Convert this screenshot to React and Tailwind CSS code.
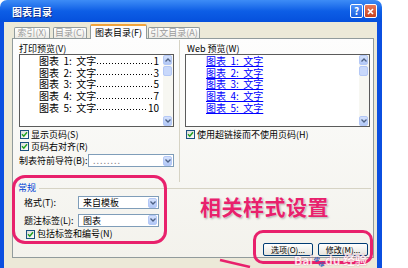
import React from 'react';

function Check() {
  return (
    <span className="w-[9px] h-[9px] shrink-0 border border-[#1c5180] bg-linear-to-br from-[#dcdcd7] to-white flex items-center justify-center">
      <svg width="7" height="7" viewBox="0 0 7 7">
        <path d="M1 3.2 L2.8 5.2 L6 1.3" fill="none" stroke="#21a121" strokeWidth="1.5" />
      </svg>
    </span>
  );
}

function Arrow({ up }) {
  return (
    <span className="w-[9px] h-[10px] shrink-0 rounded-[2px] border border-[#b4c8f6] bg-linear-to-b from-[#d4e1fc] to-[#b1c7f6] flex items-center justify-center">
      <svg width="6" height="4" viewBox="0 0 6 4">
        <path d={up ? 'M0.5 3.5 L3 1 L5.5 3.5' : 'M0.5 0.5 L3 3 L5.5 0.5'} fill="none" stroke="#4d6185" strokeWidth="1.3" />
      </svg>
    </span>
  );
}

function ScrollBar() {
  return (
    <div className="w-[10px] self-stretch bg-[#f7f7f2] flex flex-col">
      <Arrow up />
      <span className="w-[9px] h-[10px] mt-px rounded-[2px] border border-[#b4c8f6] bg-[#c8d8fb]" />
      <div className="flex-1" />
      <Arrow />
    </div>
  );
}

function Combo({ text, muted, className }) {
  return (
    <div className={`h-[13px] border border-[#7f9db9] bg-white flex items-center pr-px ${className}`}>
      <span className={`flex-1 pl-[4px] text-[9px] leading-none ${muted ? 'text-[#8a8a8a] tracking-[1px]' : 'text-black'}`}>{text}</span>
      <Arrow />
    </div>
  );
}

function Tab({ label, active, className }) {
  if (active) {
    return (
      <div className={`relative z-10 -mb-px shrink-0 whitespace-nowrap h-[15px] border border-b-0 border-[#919b9c] border-t-2 border-t-[#f1a33b] rounded-t-[2px] bg-[#fcfcfe] flex items-center justify-center text-[9px] text-black ${className}`}>
        {label}
      </div>
    );
  }
  return (
    <div className={`shrink-0 whitespace-nowrap h-[11px] border border-b-0 border-[#919b9c] rounded-t-[2px] bg-linear-to-b from-white to-[#ecebe6] flex items-center justify-center text-[9px] text-[#9b9b9b] ${className}`}>
      {label}
    </div>
  );
}

const rows = [
  ['1', '1'],
  ['2', '3'],
  ['3', '5'],
  ['4', '7'],
  ['5', '10'],
];

// caption text with the wide spacing the dialog uses
const caption = (n) => `图表\u00a0\u00a0${n}:\u00a0\u00a0文字`;

function XpButton({ children }) {
  return (
    <div className="w-[50px] h-[13px] rounded-[2px] border border-[#003c74] bg-linear-to-b from-white to-[#e6e5de] flex items-center justify-center text-[8px] text-black">
      {children}
    </div>
  );
}

export default function App() {
  return (
    <div className="relative w-[408px] h-[268px] bg-white overflow-hidden flex font-['Noto_Sans_CJK_SC','Noto_Sans',sans-serif]">
      <div className="w-[382px] h-full flex flex-col">
        {/* Title bar */}
        <div className="h-[22px] rounded-t-[7px] bg-linear-to-b from-[#3d8cf6] via-[#0d5ee6] to-[#0650dc] flex items-center pl-[12px] pr-[5px]">
          <span className="flex-1 text-[10px] font-bold text-white [text-shadow:1px_1px_0_#0a2a8a]">图表目录</span>
          <div className="flex gap-px">
            <span className="w-[13px] h-[14px] rounded-[2px] border border-white bg-linear-to-b from-[#4f93f9] to-[#1a5fe0] flex items-center justify-center text-[10px] font-bold text-white leading-none">?</span>
            <span className="w-[13px] h-[14px] rounded-[2px] border border-white bg-linear-to-b from-[#e9795a] to-[#c6401c] flex items-center justify-center">
              <svg width="7" height="7" viewBox="0 0 7 7">
                <path d="M1 1 L6 6 M6 1 L1 6" stroke="white" strokeWidth="1.6" />
              </svg>
            </span>
          </div>
        </div>

        {/* Body */}
        <div className="flex-1 flex">
          <div className="w-[4px] bg-[#0b4fe0]" />
          <div className="flex-1 bg-[#ece9d8] flex flex-col pl-[8px] pr-[3px]">
            <div className="h-[16px] flex items-end pl-[2px]">
              <Tab label="索引(X)" className="w-[36px]" />
              <Tab label="目录(C)" className="w-[34px] ml-[3px]" />
              <Tab label="图表目录(F)" active className="w-[57px] ml-[3px]" />
              <Tab label="引文目录(A)" className="w-[52px] ml-px" />
            </div>

            {/* Tab panel */}
            <div className="h-[220px] border border-[#919b9c] bg-linear-to-b from-[#fdfdfd] to-[#f3f2ec] flex flex-col">
              <div className="h-[143px] grid grid-cols-[155px_11px_185px] pl-[6px]">
                {/* Print preview */}
                <div className="flex flex-col pt-[4px]">
                  <div className="h-[11px] text-[9px] leading-[11px] text-black">打印预览(V)</div>
                  <div className="h-[73px] border border-[#5b5b5b] bg-white flex">
                    <div className="flex-1 flex flex-col pl-[19px] pr-[4px]">
                      {rows.map(([n, p]) => (
                        <div key={n} className="h-[11.7px] flex items-center text-[10px] leading-none text-black whitespace-nowrap">
                          <span>{caption(n)}</span>
                          <span className="flex-1 self-end mb-[3px] mx-px h-px bg-[linear-gradient(to_right,#000_1px,transparent_1px)] bg-[length:3px_1px] bg-repeat-x" />
                          <span>{p}</span>
                        </div>
                      ))}
                    </div>
                    <ScrollBar />
                  </div>
                  <div className="mt-[2px] h-[11px] flex items-center gap-[2px] pl-px text-[9px] text-black">
                    <Check />
                    <span>显示页码(S)</span>
                  </div>
                  <div className="mt-px h-[11px] flex items-center gap-[2px] pl-px text-[9px] text-black">
                    <Check />
                    <span>页码右对齐(R)</span>
                  </div>
                  <div className="mt-[2px] flex items-center text-[9px] text-black">
                    <span className="w-[69px]">制表符前导符(B):</span>
                    <Combo text="........" muted className="w-[86px] h-[12px]" />
                  </div>
                </div>

                <div className="flex justify-center pt-px">
                  <div className="w-px h-[142px] bg-[#d6d3c4]" />
                </div>

                {/* Web preview */}
                <div className="flex flex-col pt-[4px]">
                  <div className="h-[11px] pl-[2px] text-[9px] leading-[11px] text-black">Web 预览(W)</div>
                  <div className="h-[73px] border border-[#5b5b5b] bg-white flex">
                    <div className="flex-1 flex flex-col pl-[20px]">
                      {rows.map(([n]) => (
                        <div key={n} className="h-[11.7px] flex items-center text-[10px] leading-none text-[#0000ff] whitespace-nowrap">
                          <span className="underline">{caption(n)}</span>
                        </div>
                      ))}
                    </div>
                    <ScrollBar />
                  </div>
                  <div className="mt-[2px] h-[11px] flex items-center gap-[2px] pl-px text-[9px] text-black">
                    <Check />
                    <span>使用超链接而不使用页码(H)</span>
                  </div>
                </div>
              </div>

              {/* General group */}
              <div className="h-[12px] flex items-center pl-[5px] pr-[2px] gap-[3px]">
                <span className="text-[9px] text-[#0046d5]">常规</span>
                <div className="flex-1 h-px bg-[#d6d3c4]" />
              </div>
              <div className="mt-[2px] flex items-center pl-[11px] text-[9px] text-black">
                <span className="w-[54px]">格式(T):</span>
                <Combo text="来自模板" className="w-[81px]" />
              </div>
              <div className="mt-[4px] flex items-center pl-[11px] text-[9px] text-black">
                <span className="w-[54px]">题注标签(L):</span>
                <Combo text="图表" className="w-[81px]" />
              </div>
              <div className="mt-[2px] h-[10px] flex items-center gap-[2px] pl-[13px] text-[9px] text-black">
                <Check />
                <span>包括标签和编号(N)</span>
              </div>
              <div className="mt-[4px] flex justify-end gap-[5px] pr-[5px]">
                <XpButton>选项(O)...</XpButton>
                <XpButton>修改(M)...</XpButton>
              </div>
            </div>
          </div>
          <div className="w-[5px] bg-[#0b4fe0]" />
        </div>
      </div>

      {/* Annotations */}
      <div className="absolute left-[12px] top-[175px] w-[155px] h-[69px] rounded-[13px] border-[3px] border-[#e8216c]" />
      <div className="absolute left-[253px] top-[230px] w-[120px] h-[34px] rounded-[10px] border-[3px] border-[#e8216c]" />
      <div className="absolute left-[200px] top-[193px] text-[21px] font-bold leading-[26px] tracking-[0.5px] text-[#e8216c] [text-shadow:0_0_2px_#fff,1px_1px_2px_#9a9a9a]">
        相关样式设置
      </div>
      <svg className="absolute left-[218px] top-[258px]" width="34" height="10" viewBox="0 0 34 10">
        <path d="M2 2 L32 9" stroke="#e8216c" strokeWidth="2.5" />
      </svg>
      <div className="absolute left-[294px] top-[253px] text-[12px] font-bold leading-[14px] text-white opacity-80 [text-shadow:0_0_1px_#e8216c]">
        Bai<span className="text-[10px]">🐾</span>du 经验
      </div>
    </div>
  );
}
